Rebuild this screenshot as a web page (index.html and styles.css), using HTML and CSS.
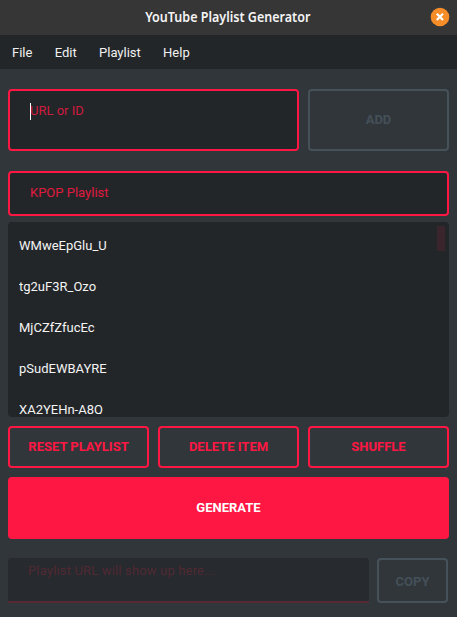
FILE: index.html
```html
<!DOCTYPE html>
<html lang="en">
<head>
<meta charset="utf-8">
<title>YouTube Playlist Generator</title>
<link rel="stylesheet" href="styles.css">
</head>
<body>
<div class="window">
  <header class="titlebar">
    <span class="title">YouTube Playlist Generator</span>
    <svg class="close" viewBox="0 0 20 20" width="20" height="20"><circle cx="10" cy="10" r="9.3"/><path d="M6.8 6.8l6.2 6.2M13 6.8l-6.2 6.2"/></svg>
  </header>
  <nav class="menubar"><span>File</span><span>Edit</span><span>Playlist</span><span>Help</span></nav>
  <main class="content">
    <div class="row add-row">
      <div class="field url"><i class="caret"></i><span>URL or ID</span></div>
      <div class="button disabled">ADD</div>
    </div>
    <div class="field name">KPOP Playlist</div>
    <div class="list">
      <ul>
        <li>WMweEpGlu_U</li>
        <li>tg2uF3R_Ozo</li>
        <li>MjCZfZfucEc</li>
        <li>pSudEWBAYRE</li>
        <li>XA2YEHn-A8Q</li>
      </ul>
      <div class="thumb"></div>
    </div>
    <div class="row actions">
      <div class="button">RESET PLAYLIST</div>
      <div class="button">DELETE ITEM</div>
      <div class="button">SHUFFLE</div>
    </div>
    <div class="button generate">GENERATE</div>
    <div class="row output-row">
      <div class="output">Playlist URL will show up here...</div>
      <div class="button disabled copy">COPY</div>
    </div>
  </main>
</div>
</body>
</html>
```
FILE: styles.css
```css
* { box-sizing: border-box; }
body { margin: 0; background: #31363b; font: 13px/16px Roboto, sans-serif; color: #f4f4f4; }
.window { height: 617px; display: flex; flex-direction: column; overflow: hidden; }
.titlebar { height: 35px; flex: none; background: #363636; display: grid; grid-template-columns: 28px 1fr 28px; align-items: center; }
.title { grid-column: 2; justify-self: center; font: 600 14px/20px "Noto Sans", sans-serif; white-space: nowrap; color: #f4f4f4; transform: translateX(-.5px) scaleX(.895); margin: -2px -20px 0; }
.close { margin: -2px 0 0 .7px; }
.close circle { fill: #f68d28; }
.close path { fill: none; stroke: #fff; stroke-width: 2.2; }
.menubar { height: 34px; flex: none; background: #232629; display: flex; align-items: center; gap: 22.3px; padding: 1px 12px 0; color: #f1f1f1; }
.content { padding: 20px 8px 0; display: flex; flex-direction: column; }
.row { display: flex; gap: 9px; }
.add-row { height: 62px; margin-bottom: 19.5px; }
.field { border: 2px solid #ff1744; border-radius: 4px; background: #232629; color: #e0193f; padding: 12px 20px; }
.url { width: 291px; display: flex; position: relative; color: #cf1a3e; }
.caret { position: absolute; left: 20px; top: 12px; width: 1px; height: 17px; background: #fff; }
.button { flex: 1; border: 2px solid #ff1744; border-radius: 4px; color: #ff1744; font-weight: 700; display: flex; align-items: center; justify-content: center; }
.disabled { border-color: #46525a; color: #445058; }
.name { height: 45px; margin-bottom: 6px; }
.list { height: 195.5px; background: #232629; border-radius: 4px; display: flex; justify-content: space-between; overflow: hidden; padding: 3px 4px 0 11px; margin-bottom: 8.5px; }
ul { list-style: none; margin: 0; padding: 0; height: 189px; overflow: hidden; }
li { height: 41px; line-height: 41px; }
.thumb { width: 8px; height: 25px; background: #3b252c; margin-top: 1px; }
.actions { height: 42px; margin-bottom: 9.5px; }
.generate { flex: none; height: 62px; background: #ff1744; color: #fff; margin-bottom: 19px; }
.output-row { height: 45px; gap: 8px; }
.output { width: 361px; background: #272a2e; border-bottom: 2px solid #572934; border-radius: 4px 4px 0 0; color: #512933; padding: 5px 20px; letter-spacing: .16px; white-space: nowrap; }
.copy { flex: none; width: 71px; padding-top: 2px; }
```
